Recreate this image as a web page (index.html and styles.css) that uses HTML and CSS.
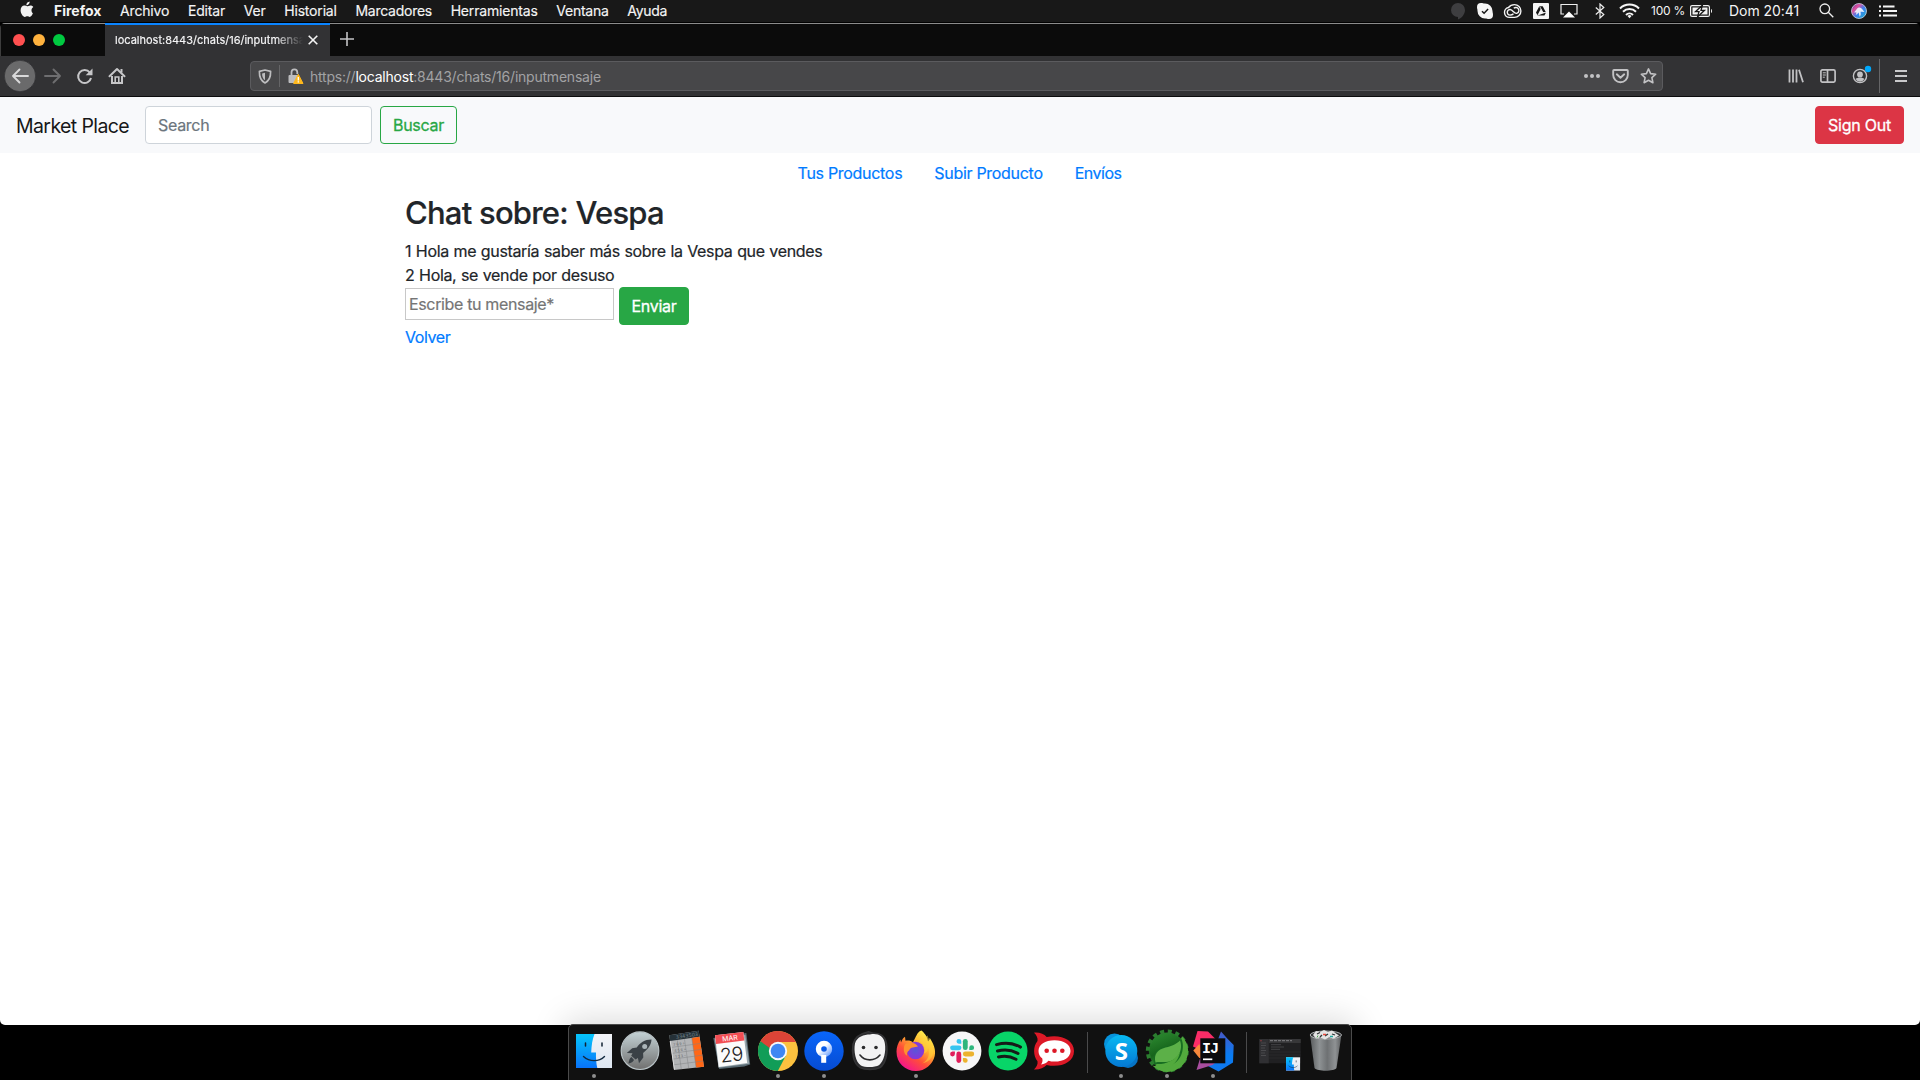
FILE: index.html
```html
<!DOCTYPE html>
<html lang="es">
<head>
<meta charset="utf-8">
<title>Market Place</title>
<link rel="stylesheet" href="styles.css">
</head>
<body>
<div class="screen">

<header class="menubar">
  <svg class="apple" width="14" height="17" viewBox="0 0 14 17"><path fill="#f2f2f2" d="M9.6.4c.1 1.300-.4 2.200-1 2.900-.6.700-1.400 1.100-2.200 1C6.300 3.200 6.800 2.200 7.400 1.600 8 .9 8.900.5 9.600.4zM12.900 12.200c-.6 1.700-1.900 3.700-3.200 3.700-.9 0-1.300-.6-2.400-.6s-1.500.6-2.400.6C3.100 16 .6 12.500.6 9.200c0-2.900 1.800-4.600 3.700-4.600 1.100 0 2.100.7 2.900.7.700 0 1.900-.8 3.300-.8 1.100 0 2.100.5 2.800 1.500-2.500 1.500-2.100 5.100-.4 6.200z"/></svg>
  <nav class="menus">
    <b>Firefox</b><span>Archivo</span><span>Editar</span><span>Ver</span><span>Historial</span><span class="tight">Marcadores</span><span>Herramientas</span><span class="tight">Ventana</span><span class="tight">Ayuda</span>
  </nav>
  <div class="status">
    <svg width="14" height="18" viewBox="0 0 14 18"><path fill="#3e3e40" d="M7 1a7 7 0 0 1 7 7c0 4-3 8-7 9.500V15A7 7 0 0 1 7 1z"/></svg>
    <svg class="s12" width="16" height="16" viewBox="0 0 16 16"><path fill="#f5f5f5" d="M4 0c2 0 2 .5 4 .5A7.500 7.500 0 0 1 15.500 8c0 1.500.5 2 .5 4a4 4 0 0 1-4 4c-2 0-2-.5-4-.5A7.500 7.500 0 0 1 .5 8C.5 6 0 6 0 4a4 4 0 0 1 4-4z"/><path d="M5 8.200l2.100 2 4-4.100" fill="none" stroke="#181818" stroke-width="1.500"/></svg>
    <svg class="s10" width="20" height="16" viewBox="0 0 20 16" fill="none" stroke="#f3f3f3" stroke-width="1.400"><path d="M5.500 4.500C6.800 2.700 9 1.600 11.500 1.600a6.400 6.400 0 0 1 0 12.800h-5a5 5 0 0 1-1-9.900z"/><path d="M10.500 10.800c-1 1-2.200 1.300-3.600 1.300a2.800 2.800 0 1 1 .3-5.600c1.300.1 2.200 1.100 3.300 2.300s2.200 2 3.600 1.400a3 3 0 1 0-3.300-4.900"/></svg>
    <svg class="s10" width="16" height="16" viewBox="0 0 16 16"><rect width="16" height="16" rx="1" fill="#f5f5f5"/><path d="M6.300 3.300h3.400l3.300 6.200-1.600 3H4.600L3 9.500z" fill="#151515"/><path d="M8 6.300l1.700 3.200H6.300zM6.700 3.500l3.200 6M4.700 12.400l1.700-2.900H13" fill="#f5f5f5" stroke="#f5f5f5" stroke-width=".8"/></svg>
    <svg class="s11" width="18" height="16" viewBox="0 0 18 16"><path d="M4 11H1V1.500h16V11h-3" fill="none" stroke="#eee" stroke-width="1.200"/><path d="M9 8.500l6 6H3z" fill="#fff"/></svg>
    <svg class="s17" width="10" height="16" viewBox="0 0 10 16" fill="none" stroke="#eee" stroke-width="1.200"><path d="M.8 4.500l8 7L5 15V1l3.800 3.500-8 7"/></svg>
    <svg class="s14" width="21" height="16" viewBox="0 0 21 16" fill="none" stroke="#f5f5f5" stroke-width="2"><path d="M1 5.500a13.500 13.500 0 0 1 19 0M4 8.800a9.200 9.200 0 0 1 13 0M7 12a5 5 0 0 1 7 0"/><path d="M8.500 13a2.800 2.800 0 0 1 4 0l-2 2.300z" fill="#f5f5f5" stroke="none"/></svg>
    <span class="pct">100 %</span>
    <svg class="s5" width="23" height="12" viewBox="0 0 23 12"><rect x=".6" y=".6" width="18.800" height="10.800" rx="1.500" fill="none" stroke="#f2f2f2" stroke-width="1.200"/><path d="M2.500 2.500h15v7h-15z" fill="#f2f2f2"/><path d="M12.500 0L5.500 6.700H9L7.500 12l7-6.700H11z" fill="#f2f2f2" stroke="#181818" stroke-width="1.300"/><path d="M21 4c1.300.3 1.300 3.700 0 4z" fill="#f2f2f2"/></svg>
    <span class="clock">Dom 20:41</span>
    <svg class="s20" width="15" height="15" viewBox="0 0 15 15" fill="none" stroke="#eee" stroke-width="1.300"><circle cx="5.800" cy="5.800" r="4.800"/><path d="M9.300 9.300l5 5"/></svg>
    <svg class="s17" width="16" height="16" viewBox="0 0 16 16"><defs><linearGradient id="siri" x1="0" y1="0" x2="1" y2="1"><stop offset="0" stop-color="#4b3ca8"/><stop offset=".3" stop-color="#e04f9b"/><stop offset=".55" stop-color="#3d7ff0"/><stop offset="1" stop-color="#16b0c4"/></linearGradient></defs><circle cx="8" cy="8" r="7.500" fill="url(#siri)" stroke="#c9d3e6" stroke-width=".8"/><path d="M2.500 9.300C5 8.500 5.500 5 8 4.500s3.500 2.500 5.500 4.300c-2 .3-2.800-.2-4 0 .5 2 .3 3.500-.7 5-.7-2-.8-3.200-1.300-4.300-.8 1.300-1.500 2-2.800 2.300.5-1.100.6-1.500.8-2.300z" fill="#fff" opacity=".85"/></svg>
    <svg class="s12" width="18" height="12" viewBox="0 0 18 12" fill="#f5f5f5"><path d="M0 .5h2v2H0zM0 5h2v2H0zM0 9.500h2v2H0zM4 .5h11.500v2H4zM4 5h14v2H4zM4 9.500h14v2H4z"/></svg>
  </div>
</header>

<section class="window">
  <div class="tabstrip">
    <div class="lights"><i class="red"></i><i class="amber"></i><i class="green"></i></div>
    <div class="tab">
      <span class="tab-title">localhost:8443/chats/16/inputmensaje</span>
      <svg width="10" height="10" viewBox="0 0 10 10"><path d="M.7.700l8.600 8.600M9.300.700L.7 9.300" stroke="#f5f5f5" stroke-width="1.600"/></svg>
    </div>
    <svg class="newtab" width="14" height="14" viewBox="0 0 14 14"><path d="M7 0v14M0 7h14" stroke="#c4c4c6" stroke-width="1.600"/></svg>
  </div>

  <div class="toolbar">
    <div class="nav-icons">
      <svg width="32" height="32" viewBox="0 0 32 32"><circle cx="16" cy="16" r="15.700" fill="#6a6a6b" stroke="#29292b" stroke-width=".6"/><path d="M24 16H9M15.500 9.500L9 16l6.500 6.500" fill="none" stroke="#d9d9da" stroke-width="1.900" stroke-linecap="round" stroke-linejoin="round"/></svg>
      <svg width="32" height="32" viewBox="0 0 32 32"><path d="M9 16h15M17.500 9.500L24 16l-6.500 6.500" fill="none" stroke="#6e6e70" stroke-width="1.900" stroke-linecap="round" stroke-linejoin="round"/></svg>
      <svg width="32" height="32" viewBox="0 0 32 32"><path d="M20.800 12.500A6.500 6.500 0 1 0 22 18" fill="none" stroke="#c6c6c8" stroke-width="2"/><path d="M23.500 8.500v6.800h-6.800z" fill="#c6c6c8"/></svg>
      <svg width="32" height="32" viewBox="0 0 32 32" fill="none" stroke="#c6c6c8" stroke-width="2"><path d="M8.500 16.200L16 9l7.500 7.200" stroke-linecap="round" stroke-linejoin="round"/><path d="M11 16v7h10v-7M20.500 12.500V9"/><path d="M14.200 23v-6h3.600v6" stroke-width="1.600"/></svg>
    </div>
    <div class="urlbar">
      <svg class="shield" width="14" height="15" viewBox="0 0 14 15"><path d="M7 1L12.600 2.300C12.800 8.500 11 12 7 13.900 3 12 1.200 8.500 1.400 2.300z" fill="none" stroke="#bdbdbf" stroke-width="1.700" stroke-linejoin="round"/><path d="M7 3.700v7.500C5 10 4.100 7.500 4.100 4.400z" fill="#bdbdbf"/></svg>
      <span class="vline"></span>
      <svg class="lock" width="16" height="17" viewBox="0 0 16 17"><path d="M3.500 7V4.200a2.900 2.900 0 0 1 5.800 0V6" fill="none" stroke="#bdbdbf" stroke-width="1.800"/><path d="M1.500 7H10v8H1.500a1 1 0 0 1-1-1V8a1 1 0 0 1 1-1z" fill="#bdbdbf"/><path d="M10.300 6.300L15 15.500H5.600z" fill="#ffb81c" stroke="#ffb81c" stroke-linejoin="round"/><path d="M10.300 9v3.400M10.300 13.200v1.400" stroke="#fff" stroke-width="1.300"/></svg>
      <span class="url">https://<em>localhost</em>:8443/chats/16/inputmensaje</span>
      <svg class="url-right" width="74" height="18" viewBox="0 0 74 18" fill="none" stroke="#c2c2c4" stroke-width="1.900"><g fill="#c2c2c4" stroke="none"><circle cx="3" cy="9" r="2"/><circle cx="9" cy="9" r="2"/><circle cx="15" cy="9" r="2"/></g><path d="M31 3h13a.8.8 0 0 1 .8.800V8a7.300 7.300 0 0 1-14.600 0V3.800A.8.800 0 0 1 31 3zM33.800 7.300l3.700 3.500 3.700-3.500" stroke-linecap="round" stroke-linejoin="round"/><path d="M65.500 1.900l2.100 4.700 5.100.6-3.800 3.500 1 5-4.400-2.500-4.400 2.500 1-5-3.800-3.500 5.100-.6z" stroke-width="1.600" stroke-linejoin="round"/></svg>
    </div>
    <div class="tools">
      <svg width="16" height="16" viewBox="0 0 16 16" stroke="#c2c2c4" stroke-width="1.800"><path d="M1.500 1.500v13M5 1.500v13M8.500 1.500v13M11 1.700l4 12.600"/></svg>
      <svg width="16" height="14" viewBox="0 0 16 14" fill="none" stroke="#c2c2c4" stroke-width="1.700"><rect x=".9" y=".9" width="14.200" height="12.200" rx="1.500"/><path d="M7.500 1v12"/><path d="M2.800 3.800h3M2.800 6h3M2.800 8.200h2" stroke-width="1"/></svg>
      <svg class="account" width="22" height="22" viewBox="0 0 22 22"><circle cx="8" cy="12" r="6.600" fill="none" stroke="#c2c2c4" stroke-width="1.400"/><circle cx="8" cy="10.400" r="2.900" fill="#c2c2c4"/><path d="M3.600 15c2-2 6.800-2 8.800 0A5 5 0 0 1 3.600 15z" fill="#c2c2c4"/><circle cx="16" cy="5" r="3.200" fill="#00a8fb"/></svg>
      <span class="vline tall"></span>
      <svg width="12" height="12" viewBox="0 0 12 12" fill="#c9c9cb"><path d="M0 0h12v1.900H0zM0 5h12v1.900H0zM0 10h12v1.900H0z"/></svg>
    </div>
  </div>

  <main class="page">
    <nav class="navbar">
      <a class="brand">Market Place</a>
      <div class="search">Search</div>
      <button class="btn outline">Buscar</button>
      <button class="btn danger">Sign Out</button>
    </nav>
    <ul class="links">
      <li><a>Tus Productos</a></li><li><a>Subir Producto</a></li><li><a class="envios">Envíos</a></li>
    </ul>
    <div class="container">
      <h2>Chat sobre: Vespa</h2>
      <p>1 Hola me gustaría saber más sobre la Vespa que vendes</p>
      <p>2 Hola, se vende por desuso</p>
      <div class="compose">
        <div class="message">Escribe tu mensaje*</div>
        <button class="btn success">Enviar</button>
      </div>
      <a class="back">Volver</a>
    </div>
  </main>
</section>

<footer class="dock">
  <!-- Finder -->
  <svg class="app run" viewBox="0 0 46 54"><defs><linearGradient id="fl" x2="0" y2="1"><stop stop-color="#06c6fb"/><stop offset="1" stop-color="#0873fa"/></linearGradient><linearGradient id="fr" x2="0" y2="1"><stop stop-color="#f3f4f8"/><stop offset="1" stop-color="#dde6f1"/></linearGradient>
    <g id="finder"><path d="M5 9h36v34H5z" fill="url(#fr)"/><path d="M5 9h18.500c-2 5-3 11-3.300 18.500H25c-.2 5 .2 11 1.300 15.500H5z" fill="url(#fl)"/><path d="M14.500 18v3M31 18v3" stroke="#123" stroke-width="1.500" stroke-linecap="round"/><path d="M12.500 31.500c6 5.500 15.500 5.500 21 0" fill="none" stroke="#122a40" stroke-width="1.400" stroke-linecap="round"/></g></defs><use href="#finder"/><circle class="dot" cx="23" cy="51" r="2"/></svg>
  <!-- Launchpad -->
  <svg class="app" viewBox="0 0 46 54"><defs><linearGradient id="lp" x2="0" y2="1"><stop stop-color="#c4d2d6"/><stop offset="1" stop-color="#70706f"/></linearGradient></defs><circle cx="23" cy="25.700" r="18.800" fill="url(#lp)" stroke="#b8c2c5" stroke-width="1.200"/><path d="M34.500 14.500c-7 0-11.500 3.500-14.700 8l-4.600.7L9.800 28l5.700.3-1.300 2.500 4.400 3.800 2.300-1.700 1.100 5.300 4.300-5.600-.2-4.600c4.800-4 8.100-7.500 8.400-13.500z" fill="#3a4146"/><circle cx="27.700" cy="21.500" r="2.500" fill="#aab4b8"/><path d="M14.500 32c-2 1-2.500 3.500-3 6.500 3-.8 4.500-1.500 5.500-3.500z" fill="#3a4146"/></svg>
  <!-- Calculator -->
  <svg class="app" viewBox="0 0 46 54"><path d="M6.300 10.300L35.700 5.700 41 41.700 11 45z" fill="#b2b4b6"/><path d="M6.300 10.300L35.700 5.700l.8 6L7.200 16z" fill="#253138"/><path d="M28.800 13l7.700-1.300L41 41.700l-7.900.9z" fill="#ff6717"/><path d="M14.300 15.200l4 29M21.500 14.200l4.200 29M28.800 13l4.300 29.500M8.300 22.400l29.500-4M9.200 28.300l29.500-4M10 34.100l29.600-4M10.700 39.800l29.500-3.800" stroke="#808284" stroke-width=".5"/><path d="M7.200 16l4.200 28.500" stroke="#ddd"/><text class="calc-display" x="13" y="14" transform="rotate(-8 13 14)">3343503</text><g class="keys"><text transform="translate(10.500 21) rotate(-8)">7   8   9   ÷</text><text transform="translate(11.500 27) rotate(-8)">4   5   6   ×</text><text transform="translate(12.500 33) rotate(-8)">1   2   3   −</text></g></svg>
  <!-- Calendar -->
  <svg class="app" viewBox="0 0 46 54"><path d="M4.300 13l33-5 3.900 31.500-6 2-25 2.500z" fill="#586a73"/><path d="M5.800 14l30.500-4 4 28.800-30.800 4z" fill="#9aa7ad"/><path d="M6 10.200L34.300 7l3.900 31L9.800 42z" fill="#fbfbfb"/><path d="M6 10.200L34.300 7l1 8.500L7 19z" fill="#f24e54"/><text class="cal-month" x="21" y="15.700" transform="rotate(-7 21 13)">MAR</text><text class="cal-day" x="22.500" y="36.500" transform="rotate(-7 22 30)">29</text></svg>
  <!-- Chrome -->
  <svg class="app" viewBox="0 0 46 54"><circle cx="23" cy="26" r="20" fill="#fcc13f"/><path d="M5.500 16.300A20 20 0 0 0 22.800 46l8-15.200L23 26z" fill="#119d58"/><path d="M5.500 16.300A20 20 0 0 1 40.500 16.500L41.500 17H23v9l-8.400-1z" fill="#dc4437"/><path d="M5.500 16.300l9.300 14.800L16 24z" fill="#119d58"/><circle cx="23" cy="26" r="9.200" fill="#f6f8fb"/><circle cx="23" cy="26" r="7.300" fill="#3f86f3"/><circle class="dot" cx="23" cy="51" r="2"/></svg>
  <!-- Sourcetree -->
  <svg class="app" viewBox="0 0 46 54"><defs><linearGradient id="stem" x1="0" x2="1" y2="1"><stop offset=".4" stop-color="#fff"/><stop offset="1" stop-color="#79a9ff"/></linearGradient><linearGradient id="st" x2="0" y2="1"><stop stop-color="#0966fa"/><stop offset="1" stop-color="#064bd2"/></linearGradient></defs><circle cx="23" cy="26" r="19.700" fill="url(#st)"/><circle cx="23" cy="24" r="5.500" fill="none" stroke="url(#stem)" stroke-width="5.400"/><path d="M20.200 30h5v7.800h-5z" fill="#fff"/><circle class="dot" cx="23" cy="51" r="2"/></svg>
  <!-- Balsamiq -->
  <svg class="app" viewBox="0 0 46 54"><path d="M21.500 6.700l4.500 1.500c6-.5 12 2 13.400 10 2 11-1.400 21-6.400 24.500-5 2.500-15 2.500-20 0-6.700-4-8.500-15-7-23.500C7.200 13 13 8.500 21.500 6.700z" fill="#2b2b2d" stroke="#343436" stroke-width="1.500"/><path d="M23 9.500c7.500-1.500 13.500 1 14.800 8.500 1.500 9-1 18-5.600 22-4.500 2.700-13.800 2.700-18.300.5C8.500 37 6.500 26 8 18.500 10 11.500 17 9.500 23 9.500z" fill="#f2f2f3"/><circle cx="16.500" cy="22.500" r="1.800" fill="#2b2b2d"/><circle cx="29" cy="22.500" r="1.800" fill="#2b2b2d"/><path d="M13 30c5 6.500 14.500 6.500 20 0" fill="none" stroke="#2b2b2d" stroke-width="1.600" stroke-linecap="round"/></svg>
  <!-- Firefox -->
  <svg class="app" viewBox="0 0 46 54"><defs><linearGradient id="fx" x1=".85" y1=".1" x2=".25" y2=".95"><stop stop-color="#fff14e"/><stop offset=".35" stop-color="#ffb02e"/><stop offset=".65" stop-color="#ff4f38"/><stop offset="1" stop-color="#f5158b"/></linearGradient><radialGradient id="globe"><stop stop-color="#5a55d8"/><stop offset="1" stop-color="#8a35d8"/></radialGradient></defs><path d="M28.500 5.500c5 4.500 6 7.500 6.500 11 1-.8 1.600-2 1.600-3.700 4 5.700 6.500 12 5.100 18.200A19.600 19.600 0 0 1 23 46C12 46 3.500 38 3.500 26.500c0-4.500 1.500-8.200 4-12l.5 3c1-2.500 2-4.500 4-5.700l.5 4c3-.6 5.500 0 7.500 1.400l2.500-5c1.500-2.300 2-5.200 6-6.700z" fill="url(#fx)"/><circle cx="22.500" cy="25.500" r="8.700" fill="url(#globe)"/><path d="M18 17.500c3 .2 5.500 2 7 4l-6.500 1.300c-1 .6-2 1.200-2.200 2.500-2 1.300-2.800 3.300-2.200 5.400-4-2-4.100-9-1.500-12z" fill="#ff922e"/><path d="M26 16c4 2.500 7 6.500 5 12.500 3-1 4-3 4-6 2.500 7 0 13-6 16 9-2 13-8.500 10.500-17.500-1-3.500-4-6.500-5-10.500z" fill="#ffd43c" opacity=".55"/><circle class="dot" cx="23" cy="51" r="2"/></svg>
  <!-- Slack -->
  <svg class="app" viewBox="0 0 46 54"><circle cx="23" cy="26" r="19.400" fill="#f6f6f7"/><g stroke-width="4.800" stroke-linecap="round"><path d="M20 22.800h-6.500" stroke="#36c5f0"/><path d="M26.300 16.300v6.400" stroke="#2eb67d"/><path d="M26.300 29h6.500" stroke="#ecb22e"/><path d="M19.800 29v6.500" stroke="#e01e5a"/></g><path d="M22.300 18.700h-2.500a2.400 2.400 0 1 1 2.500-2.500z" fill="#36c5f0"/><path d="M30.300 25.100v-2.500a2.400 2.400 0 1 1 2.500 2.500z" fill="#2eb67d"/><path d="M23.900 33h2.500a2.400 2.400 0 1 1-2.500 2.500z" fill="#ecb22e"/><path d="M15.900 26.600v2.500a2.400 2.400 0 1 1-2.500-2.500z" fill="#e01e5a"/></svg>
  <!-- Spotify -->
  <svg class="app" viewBox="0 0 46 54"><circle cx="23" cy="26" r="19.500" fill="#08d568"/><path d="M11.500 19.600c8.500-2.300 17-1.500 24 2.500M12.500 26c7-2 14.500-1 20.500 2.500M13.500 32c6-1.500 12-.8 17.500 2.300" fill="none" stroke="#161a18" stroke-width="3" stroke-linecap="round"/></svg>
  <!-- Rocket.Chat -->
  <svg class="app" viewBox="0 0 46 54"><path d="M3 7.700c5.500-.5 10 1.300 12.700 4.300 13-3 27.300 2 27.300 14s-14.300 17-27.300 14C13 43 8 44.900 3 44.500c2.700-2.500 4-5.500 3.500-8.300-4.500-5.300-4.500-15 0-20.200C7 13 5.500 10 3 7.700z" fill="#dd1927"/><path d="M23.500 15.300c9.500 0 16 4.300 16 10.700s-6.500 10.600-16 10.600c-2.500 0-4.200-.4-6.200-.9-1.500 2-4 3.500-7.300 3.800 1.300-1.800 1.900-3.700 1.300-6-2.500-2-3.800-4.500-3.800-7.500 0-6.400 6.500-10.700 16-10.700z" fill="#fff"/><circle cx="15.700" cy="25.700" r="2.300" fill="#dd1927"/><circle cx="23.500" cy="25.700" r="2.300" fill="#dd1927"/><circle cx="31.300" cy="25.700" r="2.300" fill="#dd1927"/></svg>
  <span class="split"></span>
  <!-- Skype -->
  <svg class="app" viewBox="0 0 46 54"><defs><linearGradient id="sk" x2="0" y2="1"><stop stop-color="#08b9f2"/><stop offset="1" stop-color="#0479d4"/></linearGradient></defs><circle cx="16.500" cy="19" r="10.500" fill="#0693dc"/><circle cx="30" cy="33" r="10" fill="#0674c5"/><circle cx="23.300" cy="26" r="16" fill="url(#sk)"/><text class="skype" x="23.300" y="34.700">S</text><circle class="dot" cx="23" cy="51" r="2"/></svg>
  <!-- Spring Tools -->
  <svg class="app" viewBox="0 0 46 54"><defs><linearGradient id="sp" x1=".2" y1="0" x2=".6" y2="1"><stop stop-color="#2c8a30"/><stop offset=".5" stop-color="#17651c"/><stop offset="1" stop-color="#3e9938"/></linearGradient></defs><circle cx="23.300" cy="26" r="18.500" fill="url(#sp)"/><circle cx="23.300" cy="26" r="19.500" fill="none" stroke="#2b7d2f" stroke-width="4" stroke-dasharray="4 3.650"/><path d="M38 11.200a20.800 20.800 0 0 1-29.500 29.600C18 42 34 33 38 11.200z" fill="#52aa3d"/><path d="M10 39.500c-.5-12 2-16.500 12-18 7-1 12-3.500 15.500-7.500 4 9 0 26-15.500 26.500-5 .3-8-1.500-12-1z" fill="#176d21"/><path d="M11.500 37.500c-2-8 2-13 10-15 7-1.500 11-3.500 14.500-7C39.500 25 34 36 22 37c-4 .3-7-.5-10.500.5z" fill="#5cb048"/><path d="M12.500 39c8 .5 18-2.500 23.500-12-1.500 9-8 15.500-16 16.300-3 .2-6-.8-8.500-2.500z" fill="#52aa3d"/><circle class="dot" cx="23" cy="51" r="2"/></svg>
  <!-- IntelliJ IDEA -->
  <svg class="app" viewBox="0 0 46 54"><defs><linearGradient id="ij" x2="0" y2="1"><stop stop-color="#4858c6"/><stop offset=".6" stop-color="#087cf2"/><stop offset="1" stop-color="#1177ed"/></linearGradient></defs><path d="M31 6.500l6.500 7.300 6.200 6.200-.7 17.500L28.500 46.500 18 41z" fill="url(#ij)"/><path d="M10.500 25L28 18l2 16-7.500 6L6.500 45l4-13z" fill="#a84e9f"/><path d="M7.500 6l10.500.5 8 8L10.500 25 3 21.500z" fill="#fa2c67"/><path d="M3.300 25.500l6-6.500 5 14.500-5-.5z" fill="#f7883b"/><path d="M10.300 13.300h25v25h-25z" fill="#0b0b0d"/><path d="M13 34.300h9.300" stroke="#fff" stroke-width="1.700"/><text class="ij" x="12" y="27.500">IJ</text><circle class="dot" cx="23" cy="51" r="2"/></svg>
  <span class="split"></span>
  <!-- Minimised Finder window -->
  <svg class="app" viewBox="0 0 46 54"><path d="M2.300 14h41.400v24.300H2.300z" fill="#202022"/><path d="M2.300 14h9.500v24.300H2.300z" fill="#303033"/><path d="M12 14h31.700v4H12z" fill="#373739"/><path d="M13 15.700h22" stroke="#8a8a8d" stroke-width=".9" stroke-dasharray="3 1"/><path d="M14 19.700h10M14 22h13M14 24.300h9M4 18h5M4 20.500h5M4 23h4M4 25.500h5M4 28h4M4 30.500h5" stroke="#5c5c60" stroke-width=".6"/><path d="M12 27h31.700M12 30h31.700M12 33h31.700" stroke="#2b2b2d" stroke-width=".8"/><circle cx="4" cy="15.700" r=".7" fill="#a43f42"/><use href="#finder" transform="translate(27.100 28.800) scale(.39)"/></svg>
  <!-- Trash -->
  <svg class="app" viewBox="0 0 46 54"><defs><linearGradient id="tr"><stop stop-color="#595c5e"/><stop offset=".3" stop-color="#8e9294"/><stop offset=".55" stop-color="#6e7173"/><stop offset=".8" stop-color="#8f9294"/><stop offset="1" stop-color="#5a5c5e"/></linearGradient></defs><path d="M7 9.500l4.500 33.500c3 3.600 19.500 3.600 22 0l5-33.500z" fill="url(#tr)"/><ellipse cx="22.800" cy="10" rx="15.700" ry="4" fill="#353638" stroke="#b4b7b9"/><path d="M10 10l3-4 4 1 4-2 4 2 4-1.500 4 3 3 2-5 3-5-1-4 2-5-2-4 1z" fill="#e4e4e4"/><path d="M14 9l3-1.500M22 11l3-2M29 9l3 1M17 12l2-2" stroke="#303335" stroke-width="1.300"/><path d="M20 9.500h3" stroke="#e8483b" stroke-width="1.500"/><path d="M27 11.500h3" stroke="#20a69c" stroke-width="1.500"/><path d="M14 12.500l1-2" stroke="#48a04e"/></svg>
</footer>
</div>
</body>
</html>
```

FILE: styles.css
```css
* { box-sizing: border-box; }
body {
  margin: 0;
  background: #000;
  font-family: Inter, "Liberation Sans", sans-serif;
  overflow: hidden;
}
svg { display: block; flex: none; }
.screen { width: 1920px; height: 1080px; display: flex; flex-direction: column; position: relative; }

/* system menu bar */
.menubar {
  height: 23px;
  flex: none;
  display: flex;
  align-items: center;
  padding: 0 23px 1px 20px;
  background: #181818;
  border-bottom: 1px solid #000;
  color: #f4f4f4;
  font-size: 14px;
  letter-spacing: -.18px;
  white-space: nowrap;
}
.apple { margin: -3px 20px 0 0; }
.menus { display: flex; gap: 18.7px; flex: 1; -webkit-text-stroke: .15px; }
.menus b { letter-spacing: 0; -webkit-text-stroke: 0; }
.menus .tight { letter-spacing: -.26px; }
.status { display: flex; align-items: center; }
.pct { width: 34px; margin-left: 11px; font-size: 12px; letter-spacing: -.24px; }
.clock { width: 70px; margin-left: 16px; letter-spacing: -.06px; }
.s5 { margin-left: 5px; }
.s10 { margin-left: 10px; }
.s11 { margin-left: 11px; }
.s12 { margin-left: 12px; }
.s14 { margin-left: 14px; }
.s17 { margin-left: 17px; }
.s20 { margin-left: 20px; }

/* browser window */
.window { height: 1002px; flex: none; display: flex; flex-direction: column; border-radius: 5px; overflow: hidden; }
.tabstrip {
  height: 33px;
  flex: none;
  display: flex;
  background: #0b0b0b;
  border-top: 1px solid #8b8b8b;
  border-left: 1px solid #3d3d3d;
}
.lights { width: 104px; display: flex; align-items: center; gap: 8px; padding-left: 12px; }
.lights i { width: 12px; height: 12px; border-radius: 50%; }
.red { background: #ff5050; }
.amber { background: #ffb23e; }
.green { background: #00c940; }
.tab {
  width: 225px;
  margin-top: -1px;
  display: flex;
  align-items: center;
  gap: 5px;
  padding: 0 12px 1px 10px;
  border-top: 2px solid #0a84ff;
  background: #323234;
  color: #f6f6f7;
}
.tab-title {
  width: 188px;
  overflow: hidden;
  white-space: nowrap;
  font-size: 11px;
  line-height: 16px;
  -webkit-text-stroke: .15px;
  -webkit-mask-image: linear-gradient(90deg, #000 160px, transparent 188px);
  mask-image: linear-gradient(90deg, #000 160px, transparent 188px);
}
.newtab { margin: 8px 0 0 10px; }

.toolbar {
  height: 41px;
  flex: none;
  display: flex;
  align-items: center;
  background: #323234;
  border-bottom: 1px solid #0c0c0d;
  padding: 0 13px 0 4px;
}
.nav-icons { display: flex; width: 246px; }
.nav-icons svg { margin-right: .3px; }
.urlbar {
  width: 1413px;
  height: 30px;
  display: flex;
  align-items: center;
  background: #474749;
  border: 1px solid #5b5b5e;
  border-radius: 4px;
  padding-left: 7px;
}
.vline { width: 1px; height: 22px; margin-left: 7px; background: #656567; }
.lock { margin-left: 8px; }
.url { margin: 1px 0 0 6px; font-size: 14px; letter-spacing: -.22px; color: #a2a2a4; white-space: nowrap; }
.url em { font-style: normal; color: #fff; }
.url-right { margin-left: auto; margin-right: 5px; }
.tools { display: flex; align-items: center; margin-left: auto; }
.tools svg:nth-child(2) { margin-left: 16px; }
.tools .account { margin: -2px 0 0 16px; }
.tools .tall { height: 34px; margin: 0 15px 0 5px; }

/* web page */
.page { flex: 1; background: #fff; color: #212529; font-size: 16px; line-height: 24px; letter-spacing: -.3px; -webkit-text-stroke: .2px; }
.navbar { height: 56px; display: flex; align-items: center; padding: 0 16px; background: #f8f9fb; }
.brand { width: 113px; margin-right: 16px; padding-top: 1px; color: #161718; font-size: 19.5px; letter-spacing: -.6px; line-height: 30px; white-space: nowrap; -webkit-text-stroke: 0; }
.search {
  width: 227px;
  height: 38px;
  margin-right: 8px;
  padding: 6px 12px;
  background: #fff;
  border: 1px solid #ced4da;
  border-radius: 4px;
  color: #6c757d;
}
.btn {
  height: 38px;
  padding: 6px 0;
  border: 1px solid;
  border-radius: 4px;
  font: 400 16px/24px Inter, sans-serif;
  letter-spacing: -.25px;
  color: #fff;
  -webkit-text-stroke: .3px;
}
.outline { width: 77px; background: transparent; border-color: #28a745; color: #28a745; }
.danger { width: 89px; margin-left: auto; background: #dc3545; border-color: #dc3545; }
.success { width: 70px; background: #28a745; border-color: #28a745; }
.links { display: flex; justify-content: center; margin: 0 1px 0 0; padding: 0; list-style: none; }
.links a { display: block; padding: 8px 16px; color: #007bff; }
.links .envios { letter-spacing: -.5px; }
.container { width: 1140px; margin: 0 auto; padding: 0 15px; }
h2 { margin: 0 0 7px; padding-top: 1px; font-size: 31px; line-height: 38px; font-weight: 500; letter-spacing: -.77px; }
p { margin: 0; word-spacing: .5px; letter-spacing: -.34px; }
.compose { display: flex; gap: 5px; height: 38px; }
.message { width: 209px; height: 32px; margin-top: 1px; padding: 3px; border: 1px solid #c8c8c8; color: #757575; letter-spacing: -.35px; }
.back { color: #007bff; letter-spacing: -.4px; }

/* dock, floating over the lower edge of the window */
.dock {
  position: absolute;
  left: 568px;
  top: 1024px;
  width: 784px;
  height: 58px;
  display: flex;
  padding-left: 2px;
  background: #111;
  border: 1px solid #4a4a4a;
  border-radius: 5px 5px 0 0;
  box-shadow: 0 0 34px 4px rgba(0, 0, 0, .15);
}
.app { width: 46px; height: 54px; }
.dot { fill: #8e8e8e; }
.split { width: 1px; height: 41px; margin: 7px 10px 0; background: #4a4a4b; }
svg text { font-family: Inter, sans-serif; }
.calc-display { font-size: 5px; fill: #72838a; letter-spacing: .1px; }
.keys { font-size: 3.500px; fill: #65676a; white-space: pre; }
.cal-month { font-size: 7px; fill: #fff; text-anchor: middle; letter-spacing: 0; }
.cal-day { font-size: 19.500px; font-weight: 300; fill: #222; text-anchor: middle; letter-spacing: -.5px; }
svg .skype { font: 700 24px "Open Sans", sans-serif; fill: #fff; text-anchor: middle; }
svg .ij { font: 600 15px "Liberation Mono", monospace; fill: #fff; letter-spacing: -1px; }
```
